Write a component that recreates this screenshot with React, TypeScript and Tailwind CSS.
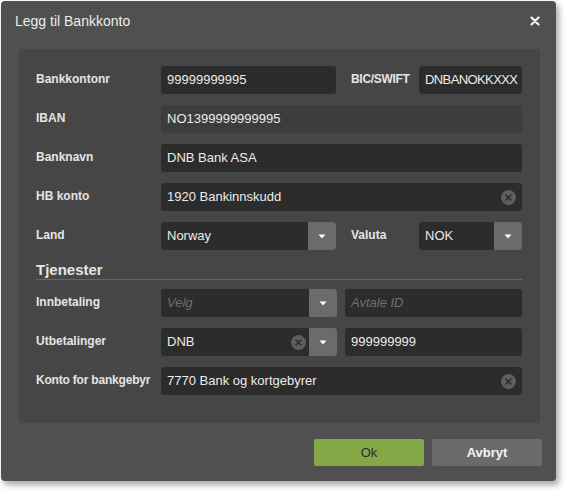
import React from 'react'

const font = { fontFamily: '"Liberation Sans", Arial, sans-serif' }

function ClearIcon() {
  return (
    <span className="flex h-[15px] w-[15px] shrink-0 items-center justify-center rounded-full bg-[#5e5e5e]">
      <svg width="7" height="7" viewBox="0 0 7 7">
        <path d="M1 1L6 6M6 1L1 6" stroke="#2e2e2e" strokeWidth="1.6" strokeLinecap="round" />
      </svg>
    </span>
  )
}

function Caret() {
  return (
    <span className="flex w-[28px] shrink-0 items-center justify-center rounded-r-[3px] bg-[#6b6b6b]">
      <svg width="8" height="5" viewBox="0 0 8 5">
        <path d="M0.5 0.5H7.5L4 4.5Z" fill="#ffffff" />
      </svg>
    </span>
  )
}

interface FieldProps {
  value?: string
  placeholder?: string
  width: string
  disabled?: boolean
  clear?: boolean
  select?: boolean
  tight?: boolean
}

function Field({ value, placeholder, width, disabled, clear, select, tight }: FieldProps) {
  return (
    <div
      className={
        'flex h-[28px] shrink-0 rounded-[3px] ' +
        width +
        (disabled ? ' bg-[#3d3d3d]' : ' bg-[#2c2c2c]')
      }
    >
      <div className={'flex min-w-0 flex-1 items-center pl-[6px] ' + (select ? 'pr-[3px]' : 'pr-[6px]')}>
        {value ? (
          <span
            className={
              'flex-1 whitespace-nowrap text-[13px] text-[#ebebeb] ' + (tight ? 'tracking-[-0.6px]' : '')
            }
          >
            {value}
          </span>
        ) : (
          <span className="flex-1 truncate text-[13px] italic text-[#6f6f6f]">{placeholder}</span>
        )}
        {clear && <ClearIcon />}
      </div>
      {select && <Caret />}
    </div>
  )
}

function Label({ children, className = '' }: { children: React.ReactNode; className?: string }) {
  return (
    <div className={'shrink-0 self-start pt-[5px] text-[12px] font-bold leading-[16px] text-[#e4e4e4] ' + className}>
      {children}
    </div>
  )
}

export default function App() {
  return (
    <div className="h-[496px] w-[570px] bg-white pl-[1px] pt-[1px]" style={font}>
      <div className="flex h-[480px] w-[555px] flex-col rounded-[4px] bg-[#505050] shadow-[3px_4px_6px_rgba(0,0,0,0.35)]">
        <div className="flex h-[48px] items-start justify-between px-[14px] pt-[10px]">
          <span className="text-[14px] text-[#ececec]">Legg til Bankkonto</span>
          <svg className="mr-[2px] mt-[5px]" width="10" height="10" viewBox="0 0 10 10">
            <path d="M1.5 1.5L8.5 8.5M8.5 1.5L1.5 8.5" stroke="#f4f4f4" strokeWidth="2.2" strokeLinecap="round" />
          </svg>
        </div>

        <div className="ml-[18px] flex h-[374px] w-[521px] flex-col gap-[11px] rounded-[2px] bg-[#464646] pl-[17px] pt-[17px]">
          <div className="flex">
            <Label className="w-[125px]">Bankkontonr</Label>
            <Field value="99999999995" width="w-[175px]" />
            <Label className="ml-[15px] w-[68px] tracking-[-0.3px]">BIC/SWIFT</Label>
            <Field value="DNBANOKKXXX" width="w-[103px]" tight />
          </div>
          <div className="flex">
            <Label className="w-[125px]">IBAN</Label>
            <Field value="NO1399999999995" width="w-[361px]" disabled />
          </div>
          <div className="flex">
            <Label className="w-[125px]">Banknavn</Label>
            <Field value="DNB Bank ASA" width="w-[361px]" />
          </div>
          <div className="flex">
            <Label className="w-[125px]">HB konto</Label>
            <Field value="1920 Bankinnskudd" width="w-[361px]" clear />
          </div>
          <div className="flex">
            <Label className="w-[125px]">Land</Label>
            <Field value="Norway" width="w-[175px]" select />
            <Label className="ml-[15px] w-[68px]">Valuta</Label>
            <Field value="NOK" width="w-[103px]" select />
          </div>

          <div className="-mb-[2px] w-[486px] border-b border-[#666666] pb-[1px] text-[15px] font-bold leading-[17px] text-[#e4e4e4]">
            Tjenester
          </div>

          <div className="flex">
            <Label className="w-[125px]">Innbetaling</Label>
            <Field placeholder="Velg" width="w-[176px]" select />
            <div className="w-[8px]" />
            <Field placeholder="Avtale ID" width="w-[177px]" />
          </div>
          <div className="flex">
            <Label className="w-[125px]">Utbetalinger</Label>
            <Field value="DNB" width="w-[176px]" clear select />
            <div className="w-[8px]" />
            <Field value="999999999" width="w-[177px]" />
          </div>
          <div className="flex">
            <Label className="w-[125px] tracking-[-0.2px]">Konto for bankgebyr</Label>
            <Field value="7770 Bank og kortgebyrer" width="w-[361px]" clear />
          </div>
        </div>

        <div className="mt-[16px] flex justify-end gap-[8px] pr-[14px]">
          <button className="h-[27px] w-[110px] rounded-[2px] bg-[#85a846] text-[13px] text-[#2b2b2b]">Ok</button>
          <button className="h-[27px] w-[110px] rounded-[2px] bg-[#6a6a6a] text-[13px] font-bold text-[#f4f4f4]">
            Avbryt
          </button>
        </div>
      </div>
    </div>
  )
}
